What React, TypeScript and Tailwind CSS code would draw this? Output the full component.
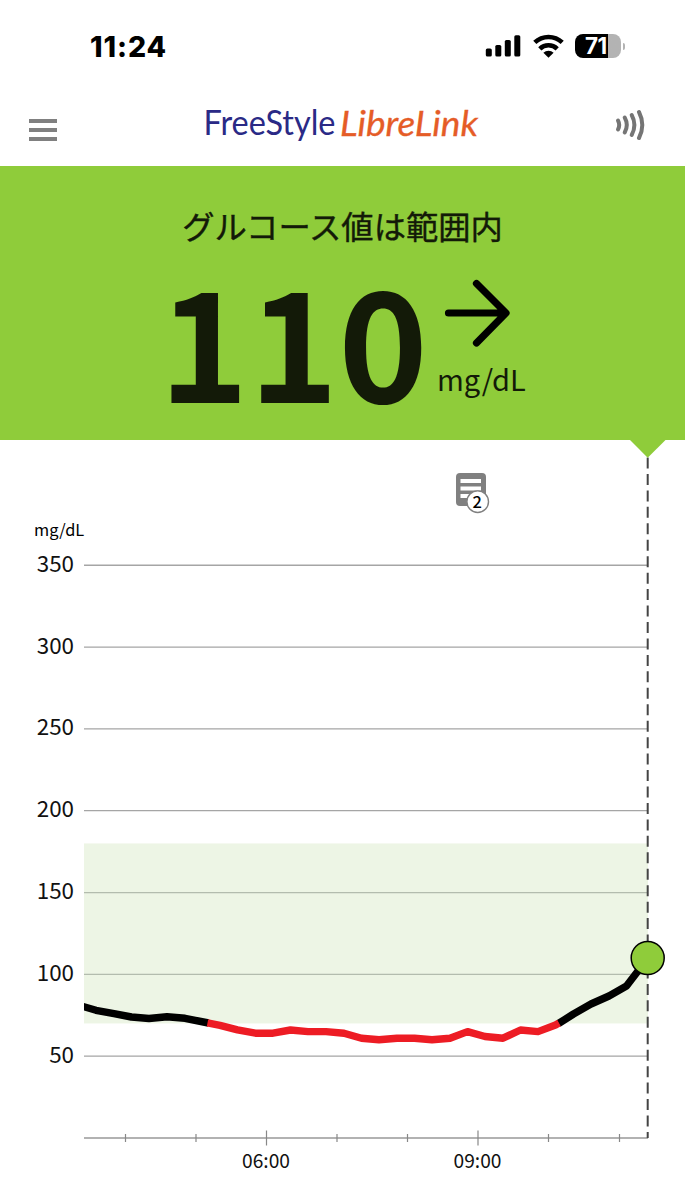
import React from "react";

interface Point {
  x: number;
  y: number;
}

const CHART_TOP = 440;
const LEFT = 84;
const RIGHT = 648;
const BASE = 1138;
const PX_PER_UNIT = 1.6365;

const levels = [350, 300, 250, 200, 150, 100, 50];

const ticks = [
  { x: 125.5 },
  { x: 196 },
  { x: 266.5, label: "06:00" },
  { x: 337 },
  { x: 407.5 },
  { x: 478, label: "09:00" },
  { x: 548.5 },
  { x: 619.5 },
];

const morning: Point[] = [
  { x: 78, y: 1005 },
  { x: 96, y: 1010.3 },
  { x: 114, y: 1013.7 },
  { x: 131.5, y: 1017 },
  { x: 149, y: 1018.5 },
  { x: 167, y: 1016.8 },
  { x: 185, y: 1018.3 },
  { x: 208.5, y: 1023 },
];

const low: Point[] = [
  { x: 207.5, y: 1022.8 },
  { x: 220, y: 1025.3 },
  { x: 237.5, y: 1029.8 },
  { x: 255.5, y: 1033.2 },
  { x: 273, y: 1033.2 },
  { x: 290.5, y: 1030 },
  { x: 308, y: 1031.6 },
  { x: 326, y: 1031.6 },
  { x: 344, y: 1033.2 },
  { x: 361.5, y: 1038.2 },
  { x: 379, y: 1039.8 },
  { x: 397, y: 1038.2 },
  { x: 414.5, y: 1038.2 },
  { x: 432, y: 1039.8 },
  { x: 450, y: 1038.2 },
  { x: 467.5, y: 1031.6 },
  { x: 485, y: 1036.5 },
  { x: 503, y: 1038.2 },
  { x: 520.5, y: 1030 },
  { x: 538, y: 1031.6 },
  { x: 555.5, y: 1025 },
  { x: 559, y: 1023 },
];

const rising: Point[] = [
  { x: 558.5, y: 1023.5 },
  { x: 573.5, y: 1014 },
  { x: 591, y: 1004 },
  { x: 609, y: 996 },
  { x: 626.5, y: 986 },
  { x: 648, y: 958 },
];

const toPoints = (points: Point[]) =>
  points.map((p) => `${p.x},${p.y}`).join(" ");

const levelY = (value: number) => BASE - value * PX_PER_UNIT;

function StatusBar() {
  return (
    <div className="flex h-[92px] items-center justify-between pl-[90px] pr-[60px]">
      <span className="mt-[2px] text-[28.5px] leading-none font-extrabold tracking-[0.9px] font-['Inter',sans-serif] text-black">
        11:24
      </span>
      <div className="flex items-center">
        <svg width="36" height="24" viewBox="0 0 36 24">
          <rect x="0.8" y="14.5" width="6" height="8" rx="1.6" />
          <rect x="10.3" y="11" width="6" height="11.5" rx="1.6" />
          <rect x="19.8" y="6" width="6" height="16.5" rx="1.6" />
          <rect x="29.3" y="1.2" width="6" height="21.3" rx="1.6" />
        </svg>
        <svg width="31" height="24" viewBox="0 0 31 24" className="ml-[12px]">
          <g fill="none" stroke="#000" strokeWidth="4.6">
            <path d="M1.8 8.4a20 20 0 0 1 27.4 0" />
            <path d="M6.8 14.8a12.6 12.6 0 0 1 17.4 0" />
          </g>
          <path d="M10.4 18.8a7.4 7.4 0 0 1 10.2 0L15.5 23.8z" />
        </svg>
        <div className="ml-[11px] flex items-center">
          <div className="flex h-6 w-[46px] items-center rounded-[8px] bg-linear-to-r from-black from-[72%] to-[#b3b3b3] to-[72%] pl-[10px]">
            <span className="text-[22.5px] leading-6 font-bold tracking-[-0.5px] text-white font-['Inter',sans-serif]">
              71
            </span>
          </div>
          <div className="ml-[2px] h-[7px] w-[2px] rounded-r-full bg-[#b3b3b3]" />
        </div>
      </div>
    </div>
  );
}

function NavBar() {
  return (
    <div className="flex h-[74px] items-start justify-between pl-[29px] pr-[39px]">
      <button type="button" className="mt-[27px] flex w-7 flex-col gap-[5px]">
        <span className="h-1 w-full bg-[#808080]" />
        <span className="h-1 w-full bg-[#808080]" />
        <span className="h-1 w-full bg-[#808080]" />
      </button>
      <svg width="280" height="50" viewBox="0 0 280 50" className="mt-2 ml-[14px]">
        <text
          x="0.5"
          y="35.3"
          fontSize="35"
          fill="#2a2a86"
          textLength="132"
          lengthAdjust="spacingAndGlyphs"
          className="font-['Lato',sans-serif]"
        >
          FreeStyle
        </text>
        <text
          x="137"
          y="36"
          fontSize="34"
          fill="#e55c27"
          stroke="#e55c27"
          strokeWidth="0.3"
          textLength="138"
          lengthAdjust="spacingAndGlyphs"
          className="font-['Lato',sans-serif] italic"
        >
          LibreLink
        </text>
      </svg>
      <svg
        width="31"
        height="32"
        viewBox="0 0 31 32"
        className="mt-[17px]"
        fill="none"
        stroke="#757575"
        strokeWidth="4"
        strokeLinecap="round"
      >
        <path d="M3 11.5q2.4 4.5 0 9" />
        <path d="M9.7 8.5q4.2 7.5 0 15" />
        <path d="M16.7 6q5.4 10 0 20" />
        <path d="M24 3q6.6 13 0 26" />
      </svg>
    </div>
  );
}

function Banner() {
  return (
    <section className="flex h-[274px] flex-col bg-[#8fcc3a] font-['Noto_Sans_CJK_JP',sans-serif] text-[#131a08]">
      <h1 className="mt-[39px] text-center text-[32.3px] leading-10 font-normal [-webkit-text-stroke:0.4px_#131a08]">
        グルコース値は範囲内
      </h1>
      <div className="flex pl-[159px]">
        <span className="mt-8 w-[276px] text-[152px] leading-[120px] font-bold">
          110
        </span>
        <div className="ml-[2px] flex flex-col">
          <svg
            width="70"
            height="70"
            viewBox="0 0 70 70"
            className="mt-[33px] ml-[6px]"
            fill="none"
            stroke="#000"
            strokeWidth="7.2"
            strokeLinecap="round"
            strokeLinejoin="round"
          >
            <path d="M5.5 35h57M33.5 5.5L63 35 33.5 65" />
          </svg>
          <span className="mt-[10px] text-[29px] leading-10">mg/dL</span>
        </div>
      </div>
    </section>
  );
}

function GlucoseChart() {
  return (
    <svg
      width="685"
      height="760"
      viewBox={`0 ${CHART_TOP} 685 760`}
      className="block font-['Noto_Sans_CJK_JP',sans-serif]"
    >
      <clipPath id="plot">
        <rect x={LEFT} y={CHART_TOP} width={RIGHT - LEFT} height={BASE - CHART_TOP} />
      </clipPath>
      <rect
        x={LEFT}
        y={levelY(180)}
        width={RIGHT - LEFT}
        height={110 * PX_PER_UNIT}
        fill="#edf5e5"
      />
      <text x="34" y="535.5" fontSize="16.4">
        mg/dL
      </text>
      {levels.map((value) => (
        <g key={value}>
          <line
            x1={LEFT}
            x2={RIGHT}
            y1={levelY(value)}
            y2={levelY(value)}
            stroke={value === 150 || value === 100 ? "#b3bcae" : "#a5a5a5"}
            strokeWidth="1.3"
          />
          <text
            x="74"
            y={levelY(value) + 6.5}
            fontSize="22.4"
            textAnchor="end"
            fill="#111"
          >
            {value}
          </text>
        </g>
      ))}

      {/* time axis */}
      <line x1={LEFT} x2={RIGHT} y1={BASE} y2={BASE} stroke="#999" strokeWidth="1.7" />
      {ticks.map((tick) => (
        <g key={tick.x}>
          <line
            x1={tick.x}
            x2={tick.x}
            y1={tick.label ? BASE - 7.5 : BASE - 4}
            y2={tick.label ? BASE + 7.5 : BASE + 4}
            stroke="#888"
            strokeWidth="1.2"
          />
          {tick.label && (
            <text
              x={tick.x - 0.5}
              y="1167.5"
              fontSize="19.2"
              textAnchor="middle"
              fill="#111"
            >
              {tick.label}
            </text>
          )}
        </g>
      ))}

      {/* current time marker */}
      <line
        x1="647.7"
        x2="647.7"
        y1="457.5"
        y2={BASE}
        stroke="#444"
        strokeWidth="2"
        strokeDasharray="11 5.45"
      />
      <path d="M629.5 439.5h36.5L647.7 457.8z" fill="#8fcc3a" />

      {/* glucose trace */}
      <g fill="none" strokeWidth="7.4" strokeLinejoin="round" clipPath="url(#plot)">
        <polyline points={toPoints(morning)} stroke="#000" />
        <polyline points={toPoints(rising)} stroke="#000" />
        <polyline points={toPoints(low)} stroke="#ed1c24" />
      </g>
      <circle cx="647.7" cy="958" r="16.5" fill="#8fcc3a" stroke="#000" strokeWidth="1.5" />

      {/* notes */}
      <rect x="456" y="473" width="30" height="33" rx="4" fill="#808080" />
      <path d="M460.5 481h20.5M460.5 488.5h20.5M460.5 496h20.5" stroke="#fff" strokeWidth="3.8" />
      <circle cx="477.7" cy="501.7" r="10.8" fill="#fff" stroke="#808080" strokeWidth="1.4" />
      <text x="477.3" y="508" fontSize="16.5" fontWeight="500" textAnchor="middle">
        2
      </text>
    </svg>
  );
}

export default function App() {
  return (
    <main className="h-[1200px] w-[685px] overflow-hidden bg-white">
      <StatusBar />
      <NavBar />
      <Banner />
      <GlucoseChart />
    </main>
  );
}
